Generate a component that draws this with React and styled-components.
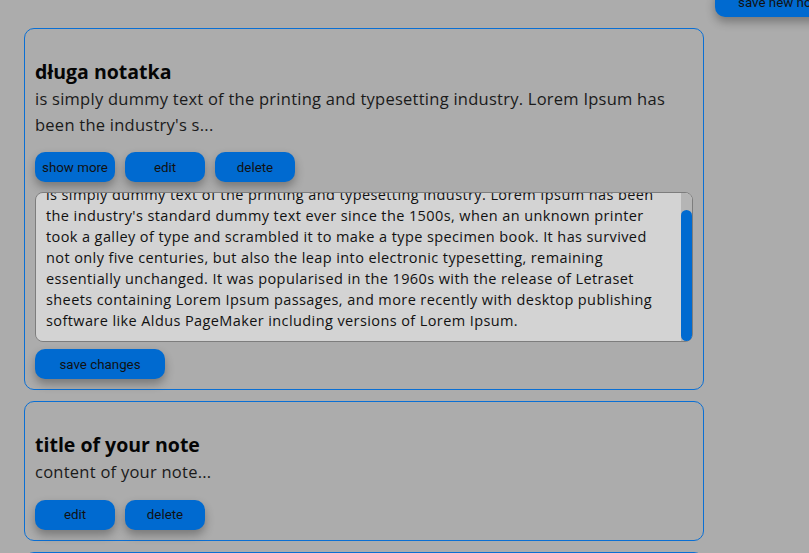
import React, { useEffect, useRef, useState } from "react";
import styled, { createGlobalStyle } from "styled-components";

const GlobalStyle = createGlobalStyle`
  html, body {
    margin: 0;
    padding: 0;
    background: #acacac;
  }
  body {
    font-family: "Open Sans", "Noto Sans", sans-serif;
    overflow: hidden;
  }
`;

const longText =
  "is simply dummy text of the printing and typesetting industry. Lorem Ipsum has been the industry's standard dummy text ever since the 1500s, when an unknown printer took a galley of type and scrambled it to make a type specimen book. It has survived not only five centuries, but also the leap into electronic typesetting, remaining essentially unchanged. It was popularised in the 1960s with the release of Letraset sheets containing Lorem Ipsum passages, and more recently with desktop publishing software like Aldus PageMaker including versions of Lorem Ipsum.";

const notes = [
  {
    id: 1,
    title: "długa notatka",
    content: longText.slice(0, 100) + "...",
    long: true,
    editing: true,
  },
  {
    id: 2,
    title: "title of your note",
    content: "content of your note...",
    long: false,
    editing: false,
  },
  {
    id: 3,
    title: "title of your note",
    content: "content of your note...",
    long: false,
    editing: false,
  },
];

const App = () => {
  return (
    <>
      <GlobalStyle />
      <Page>
        <NewNoteButton>save new note</NewNoteButton>
        <NotesList>
          {notes.map((note) => (
            <Note key={note.id} note={note} />
          ))}
        </NotesList>
      </Page>
    </>
  );
};

//? textarea with a drawn scrollbar, kept scrolled to the end of the text
const NoteEditor = ({ text }) => {
  const areaRef = useRef(null);
  const [thumb, setThumb] = useState({ top: 0, height: 0 });

  const measure = () => {
    const el = areaRef.current;
    if (!el) return;
    const track = el.clientHeight;
    const ratio = track / el.scrollHeight;
    setThumb({
      top: el.scrollTop * ratio,
      height: Math.min(track, track * ratio),
    });
  };

  useEffect(() => {
    const el = areaRef.current;
    if (el) {
      el.scrollTop = el.scrollHeight;
      measure();
    }
  }, []);

  return (
    <EditorWrap>
      <Editor ref={areaRef} defaultValue={text} onScroll={measure} />
      <Track>
        <Thumb style={{ top: thumb.top, height: thumb.height }} />
      </Track>
    </EditorWrap>
  );
};

const Note = ({ note }) => {
  return (
    <Card>
      <Title>{note.title}</Title>
      <Content>{note.content}</Content>
      <Actions>
        {note.long && <Button>show more</Button>}
        <Button>edit</Button>
        <Button>delete</Button>
      </Actions>
      {note.editing && (
        <>
          <NoteEditor text={longText} />
          <Actions $top={7}>
            <Button $wide>save changes</Button>
          </Actions>
        </>
      )}
    </Card>
  );
};

const Page = styled.main`
  position: relative;
  height: 553px;
  padding: 28px 0 0 24px;
  box-sizing: border-box;
  overflow: hidden;
`;

const NotesList = styled.section`
  display: flex;
  flex-direction: column;
  gap: 11px;
  width: 680px;
`;

const Card = styled.article`
  box-sizing: border-box;
  border: 1px solid #0a6fd4;
  border-radius: 10px;
  padding: 29px 10px 10px 10px;
`;

const Title = styled.h2`
  margin: 0;
  font-size: 19.5px;
  line-height: 28px;
  font-weight: 700;
  color: #050505;
`;

const Content = styled.p`
  margin: 0;
  font-size: 16.5px;
  line-height: 25.5px;
  letter-spacing: 0.25px;
  color: #1a1a1a;
`;

const Actions = styled.div`
  display: flex;
  gap: 10px;
  margin-top: ${({ $top }) => ($top !== undefined ? $top : 15)}px;
`;

const Button = styled.button`
  width: ${({ $wide }) => ($wide ? 130 : 80)}px;
  height: 30px;
  padding: 0;
  border: none;
  border-radius: 10px;
  background: #006ad0;
  color: #111;
  font-family: Roboto, "Liberation Sans", Arial, sans-serif;
  font-size: 13.33px;
  box-shadow: 0 5px 10px rgba(0, 0, 0, 0.3);
  cursor: pointer;
`;

const NewNoteButton = styled(Button)`
  position: absolute;
  top: -13px;
  left: 715px;
  width: 131px;
`;

const EditorWrap = styled.div`
  position: relative;
  margin-top: 10px;
  height: 150px;
`;

const Editor = styled.textarea`
  display: block;
  box-sizing: border-box;
  width: 100%;
  height: 100%;
  margin: 0;
  padding: 10px 21px 10px 10px;
  border: 1px solid #7d7d7d;
  border-radius: 8px;
  background: #d3d3d3;
  color: #111;
  font-family: "Open Sans", "Noto Sans", sans-serif;
  font-size: 14.5px;
  line-height: 21px;
  letter-spacing: 0.4px;
  resize: none;
  outline: none;
  scrollbar-width: none;

  &::-webkit-scrollbar {
    display: none;
  }
`;

const Track = styled.div`
  position: absolute;
  top: 1px;
  right: 1px;
  bottom: 1px;
  width: 11px;
  background: #b5b5b5;
  border-radius: 0 7px 7px 0;
  pointer-events: none;
`;

const Thumb = styled.div`
  position: absolute;
  left: 0;
  right: 0;
  background: #006ad0;
  border-radius: 6px;
`;

export default App;
